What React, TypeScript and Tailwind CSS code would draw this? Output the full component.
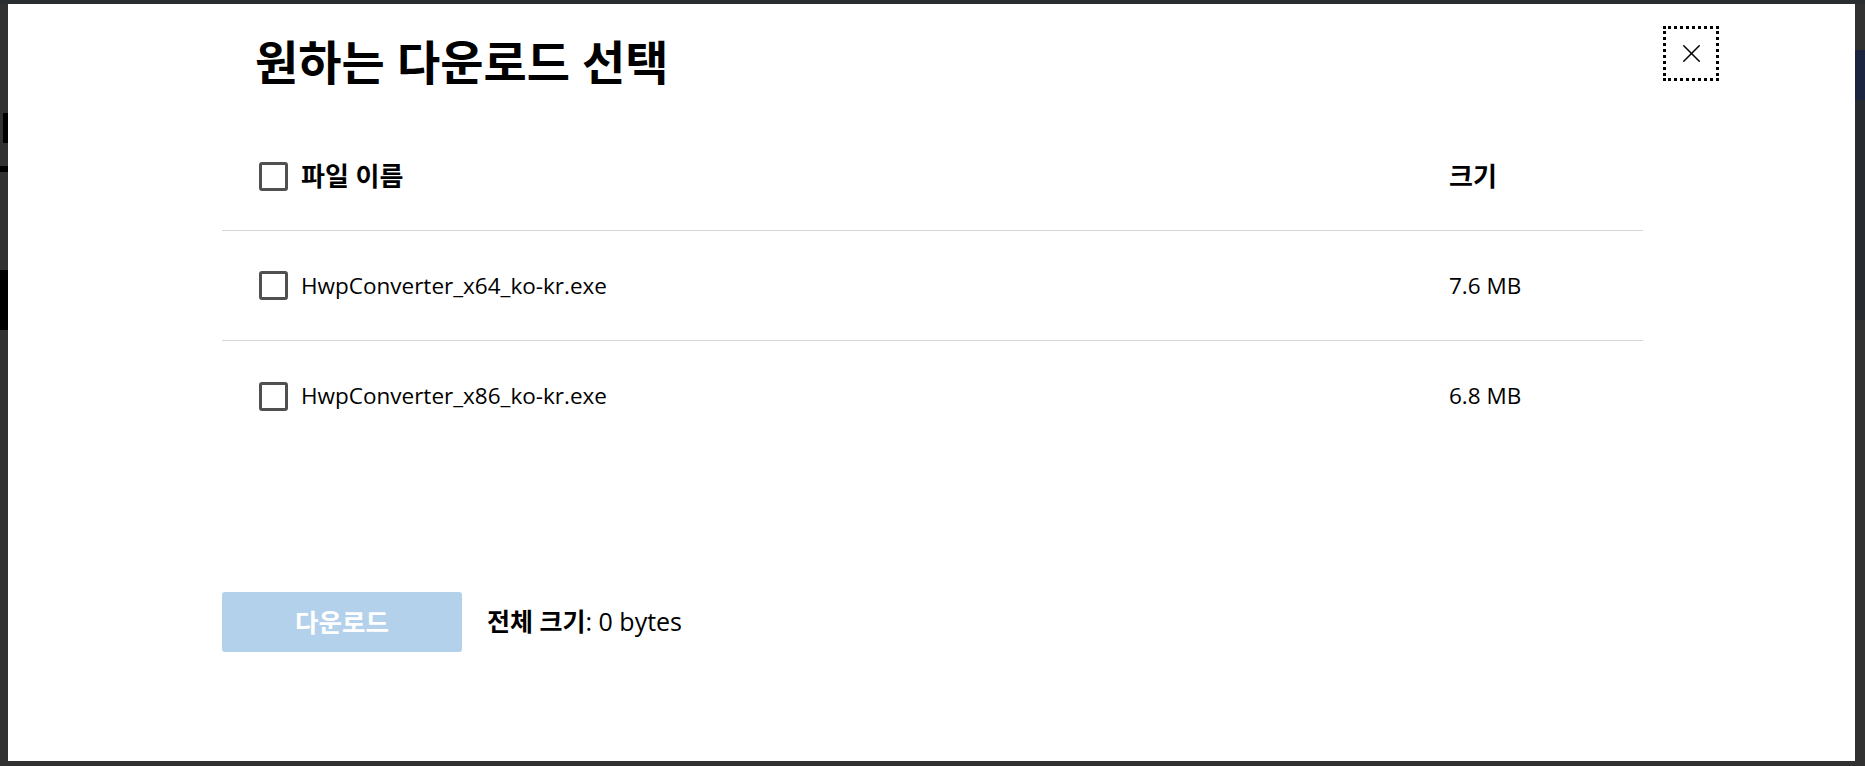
import { X } from 'lucide-react';

const files = [
  { name: 'HwpConverter_x64_ko-kr.exe', size: '7.6 MB' },
  { name: 'HwpConverter_x86_ko-kr.exe', size: '6.8 MB' },
];

function Box() {
  return (
    <span className="block w-[29px] h-[29px] shrink-0 rounded-[3px] border-[3px] border-[#505050] bg-white" />
  );
}

export default function App() {
  return (
    <div
      className="relative h-[766px] w-full overflow-hidden bg-[#313131] pt-[4px] pl-[8px] pr-[10px] pb-[5px] flex text-black"
      style={{ fontFamily: '"Open Sans", "Noto Sans CJK KR", sans-serif' }}
    >
      {/* page behind the dialog */}
      <div className="absolute left-0 top-0 w-full h-[4px] bg-[#2a2d30]" />
      <div className="absolute left-[3px] top-[113px] w-[5px] h-[30px] bg-black" />
      <div className="absolute left-0 top-[166px] w-[8px] h-[6px] bg-black" />
      <div className="absolute left-0 top-[270px] w-[8px] h-[60px] bg-black" />
      <div className="absolute right-0 top-[50px] w-[10px] h-[50px] bg-[#1b2540]" />
      <div className="absolute right-0 top-[100px] w-[10px] h-[220px] bg-[#272b30]" />

      <div className="relative flex-1 bg-white flex flex-col pl-[214px] pt-[28px]">
        <button className="absolute left-[1655px] top-[22px] w-[56px] h-[55px] flex items-center justify-center border-[3px] border-dotted border-black">
          <X size={31} strokeWidth={1.15} />
        </button>

        <h1 className="ml-[33px] text-[47px] leading-[60px] font-bold">원하는 다운로드 선택</h1>

        <div className="w-[1421px] mt-[31px]">
          <div className="h-[108px] flex items-center border-b border-[#d6d6d6] pl-[37px] text-[26px] font-bold">
            <Box />
            <span className="ml-[13px] flex-1">파일 이름</span>
            <span className="w-[194px]">크기</span>
          </div>
          {files.map((f, i) => (
            <div
              key={f.name}
              className={`h-[110px] flex items-center pl-[37px] text-[22.5px] ${i === 0 ? 'border-b border-[#d6d6d6]' : ''}`}
            >
              <Box />
              <span className="ml-[13px] flex-1">{f.name}</span>
              <span className="w-[194px]">{f.size}</span>
            </div>
          ))}
        </div>

        <div className="mt-[141px] flex items-center">
          <button className="w-[240px] h-[60px] rounded-[3px] bg-[#b3d1ea] text-white text-[25.5px] font-bold">
            다운로드
          </button>
          <p className="ml-[25px] text-[25px]">
            <span className="font-bold">전체 크기</span>: 0 bytes
          </p>
        </div>
      </div>
    </div>
  );
}
